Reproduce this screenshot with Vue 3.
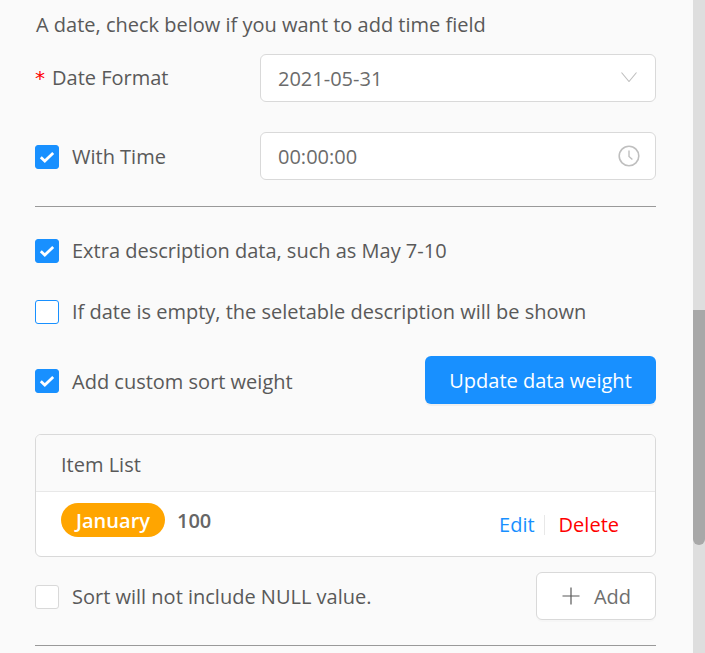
<script setup>
const checkPath = 'M1.8 6.2l4 3.8 8.4-8';
</script>

<template>
  <div class="page">
    <main class="panel">
      <p class="intro">A date, check below if you want to add time field</p>

      <div class="row">
        <label class="field-label"><span class="req">*</span>Date Format</label>
        <div class="input">
          <span>2021-05-31</span>
          <svg class="chev" width="16" height="10" viewBox="0 0 16 10"><path d="M0.5 0.5L8 9.5l7.5-9" fill="none" stroke="#bfbfbf" stroke-width="1.1"/></svg>
        </div>
      </div>

      <div class="row second-field">
        <label class="check-line">
          <span class="box on"><svg width="16" height="12" viewBox="0 0 16 12"><path :d="checkPath" fill="none" stroke="#fff" stroke-width="2.8"/></svg></span>
          <span>With Time</span>
        </label>
        <div class="input">
          <span>00:00:00</span>
          <svg class="clock" width="22" height="22" viewBox="0 0 22 22"><circle cx="11" cy="11" r="9.8" fill="none" stroke="#bfbfbf" stroke-width="1.6"/><path d="M11 5.5V11.5l3.4 3" fill="none" stroke="#bfbfbf" stroke-width="1.4"/></svg>
        </div>
      </div>

      <hr class="rule rule-a" />

      <label class="check-line line-a">
        <span class="box on"><svg width="16" height="12" viewBox="0 0 16 12"><path :d="checkPath" fill="none" stroke="#fff" stroke-width="2.8"/></svg></span>
        <span>Extra description data, such as May 7-10</span>
      </label>

      <label class="check-line line-b">
        <span class="box focus"></span>
        <span>If date is empty, the seletable description will be shown</span>
      </label>

      <div class="row weight-row">
        <label class="check-line">
          <span class="box on"><svg width="16" height="12" viewBox="0 0 16 12"><path :d="checkPath" fill="none" stroke="#fff" stroke-width="2.8"/></svg></span>
          <span class="weight-text">Add custom sort weight</span>
        </label>
        <button class="primary">Update data weight</button>
      </div>

      <section class="card">
        <header class="card-head">Item List</header>
        <div class="card-body">
          <span class="tag">January</span>
          <span class="num">100</span>
          <span class="actions">
            <a class="edit">Edit</a>
            <i class="sep"></i>
            <a class="del">Delete</a>
          </span>
        </div>
      </section>

      <div class="row add-row">
        <label class="check-line">
          <span class="box"></span>
          <span>Sort will not include NULL value.</span>
        </label>
        <button class="add">
          <svg width="18" height="18" viewBox="0 0 18 18"><path d="M9 0.5v17M0.5 9h17" fill="none" stroke="#595959" stroke-width="1.2"/></svg>
          <span>Add</span>
        </button>
      </div>

      <hr class="rule rule-b" />
    </main>
    <aside class="scrollbar"><div class="thumb"></div></aside>
  </div>
</template>

<style>
html, body { margin: 0; padding: 0; }
</style>

<style scoped>
.page {
  width: 705px;
  height: 653px;
  display: flex;
  overflow: hidden;
  background: #fafafa;
  font-family: "Open Sans", "Noto Sans", sans-serif;
  font-size: 20px;
  color: #595959;
}
.panel {
  width: 693px;
  box-sizing: border-box;
  padding: 0 37px 0 35px;
  flex: none;
}
.scrollbar {
  width: 12px;
  flex: none;
  background: #dedede;
}
.thumb {
  margin-top: 310px;
  height: 235px;
  background: #a8a8a8;
  border-radius: 0 0 6px 6px;
}
.intro {
  margin: 0;
  padding: 10px 0 0 1px;
  height: 54px;
  box-sizing: border-box;
  line-height: 30px;
}
.row {
  display: flex;
  align-items: center;
  justify-content: space-between;
}
.second-field { margin-top: 30px; }
.field-label { display: flex; align-items: center; margin-top: -1px; }
.req { color: #ff0000; margin-right: 7px; font-family: "DejaVu Sans", sans-serif; font-size: 20px; }
.input {
  width: 396px;
  height: 48px;
  box-sizing: border-box;
  background: #fff;
  border: 1px solid #d9d9d9;
  border-radius: 6px;
  padding: 0 17px;
  display: flex;
  align-items: center;
  justify-content: space-between;
  color: #6b6b6b;
}
.chev { margin-right: 1px; margin-top: -3px; }
.clock { margin-right: -2px; margin-top: -1px; }
.rule {
  border: 0;
  margin: 0;
  height: 1px;
  background: #999;
}
.rule-a { margin-top: 26px; }
.rule-b { margin-top: 25px; }
.check-line { display: flex; align-items: center; gap: 13px; line-height: 28px; }
.row .check-line { margin-top: 2px; }
.weight-text { margin-top: 2px; }
.box {
  width: 24px;
  height: 24px;
  box-sizing: border-box;
  background: #fff;
  border: 1px solid #d9d9d9;
  border-radius: 3px;
  display: flex;
  align-items: center;
  justify-content: center;
  flex: none;
}
.box.on { background: #1890ff; border-color: #1890ff; }
.box.focus { border-color: #1890ff; }
.line-a { margin-top: 30px; }
.line-b { margin-top: 33px; }
.weight-row { margin-top: 30px; height: 48px; }
.primary {
  width: 231px;
  height: 48px;
  border: 0;
  border-radius: 6px;
  background: #1890ff;
  color: #fff;
  font: inherit;
  font-weight: 500;
  box-shadow: 0 2px 0 rgba(0, 0, 0, 0.045);
  padding: 0;
}
.card {
  margin-top: 30px;
  height: 123px;
  box-sizing: border-box;
  border: 1px solid #d9d9d9;
  border-radius: 6px;
  overflow: hidden;
  background: #fff;
}
.card-head {
  height: 57px;
  box-sizing: border-box;
  padding-left: 25px;
  line-height: 60px;
  background: #fafafa;
  border-bottom: 1px solid #e8e8e8;
}
.card-body {
  height: 64px;
  padding: 11px 36px 0 25px;
  box-sizing: border-box;
  display: flex;
  align-items: flex-start;
}
.tag {
  width: 104px;
  height: 34px;
  border-radius: 17px;
  background: #ffa500;
  color: #fff;
  font-weight: 600;
  text-align: center;
  line-height: 36px;
}
.num { margin-left: 12px; line-height: 36px; font-weight: 600; color: #666; }
.actions { margin-left: auto; display: flex; align-items: center; margin-top: 7px; line-height: 30px; }
.edit { color: #1890ff; }
.del { color: #ff0000; }
.sep { width: 1px; height: 20px; background: #e8e8e8; margin: 0 14px 0 9px; }
.add-row { margin-top: 15px; height: 48px; }
.add {
  width: 120px;
  height: 48px;
  box-sizing: border-box;
  background: #fff;
  border: 1px solid #d9d9d9;
  border-radius: 6px;
  color: #6f6f6f;
  font: inherit;
  display: flex;
  align-items: center;
  justify-content: center;
  gap: 14px;
  padding: 0 0 0 1px;
  box-shadow: 0 2px 0 rgba(0, 0, 0, 0.015);
}
</style>
